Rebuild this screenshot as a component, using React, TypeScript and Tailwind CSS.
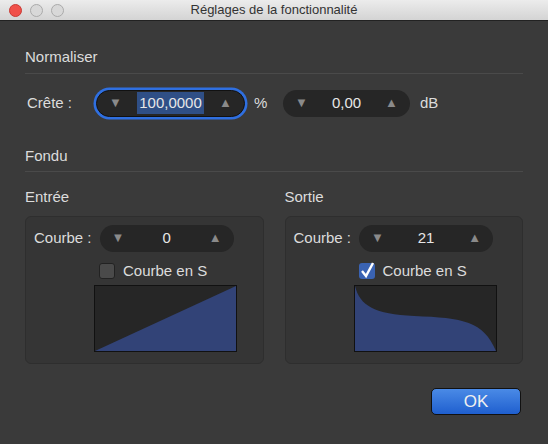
import React from 'react'

const font = { fontFamily: '"Liberation Sans", Arial, sans-serif' }

function Stepper({ value, w, focused }: { value: string; w: string; focused?: boolean }) {
  return (
    <div className={`${w} h-[27px] flex items-center justify-between px-3 rounded-full bg-[#262626] ${focused ? 'ring-[2.5px] ring-[#2f6fe0] border border-[#111]' : ''}`}>
      <span className="text-[#8a8a8a] text-[13px]">▼</span>
      <span className={`text-[15px] text-[#e6e6e6] ${focused ? 'bg-[#2f4f86] px-0.5' : ''}`}>{value}</span>
      <span className="text-[#8a8a8a] text-[13px]">▲</span>
    </div>
  )
}

function Panel({ title, value, checked, curve }: { title: string; value: string; checked?: boolean; curve: string }) {
  return (
    <div className="flex-1 flex flex-col">
      <div className="text-[15px] text-[#dcdcdc] mb-[7px]">{title}</div>
      <div className="h-[148px] rounded-md bg-[#353535] border border-[#2e2e2e] flex flex-col pl-[8px] pt-[8px]">
        <div className="flex items-center gap-[8px]">
          <span className="text-[15px] text-[#dcdcdc]">Courbe :</span>
          <Stepper value={value} w="w-[134px]" />
        </div>
        <div className="flex items-center gap-[8px] ml-[65px] mt-[8px]">
          {checked ? (
            <div className="w-[16px] h-[16px] rounded-[3px] bg-[#3a63b3] flex items-center justify-center">
              <svg width="16" height="18" viewBox="0 0 16 18"><path d="M3 9 L7 14 L14 1" stroke="white" strokeWidth="2.4" fill="none" /></svg>
            </div>
          ) : (
            <div className="w-[16px] h-[16px] rounded-[3px] bg-[#4a4a4a] border border-[#222]" />
          )}
          <span className="text-[15px] text-[#dcdcdc]">Courbe en S</span>
        </div>
        <div className="ml-[60px] mt-[3px] w-[143px] h-[67px] bg-[#262626] border border-[#111]">
          <svg width="141" height="65" viewBox="0 0 143 65" preserveAspectRatio="none"><path d={curve} fill="#324377" /></svg>
        </div>
      </div>
    </div>
  )
}

export default function App() {
  return (
    <div style={font} className="w-[548px] h-[444px] bg-[#3a3a3a] flex flex-col overflow-hidden">
      <div className="h-[21px] bg-gradient-to-b from-[#ececec] to-[#d4d4d4] border-b border-[#222] flex items-center relative">
        <div className="flex gap-[8px] pl-[9px]">
          <span className="w-[13px] h-[13px] rounded-full bg-[#f0504a] border border-[#c93a34]" />
          <span className="w-[13px] h-[13px] rounded-full bg-[#d8d8d8] border border-[#aaa]" />
          <span className="w-[13px] h-[13px] rounded-full bg-[#d8d8d8] border border-[#aaa]" />
        </div>
        <div className="absolute inset-0 flex items-center justify-center text-[13px] text-[#333]">Réglages de la fonctionnalité</div>
      </div>
      <div className="flex flex-col px-[25px] pt-[25px]">
        <div className="text-[15px] text-[#dcdcdc] pb-[4px] border-b border-[#4a4a4a]">Normaliser</div>
        <div className="flex items-center mt-[16px] pl-[2px]">
          <span className="text-[15px] text-[#dcdcdc] w-[69px]">Crête :</span>
          <Stepper value="100,0000" w="w-[149px]" focused />
          <span className="text-[15px] text-[#dcdcdc] ml-[9px] w-[29px]">%</span>
          <Stepper value="0,00" w="w-[127px]" />
          <span className="text-[15px] text-[#dcdcdc] ml-[10px]">dB</span>
        </div>
        <div className="text-[15px] text-[#dcdcdc] pb-[4px] border-b border-[#4a4a4a] mt-[28px]">Fondu</div>
        <div className="flex gap-[21px] mt-[14px]">
          <Panel title="Entrée" value="0" curve="M0 65 L143 0 L143 65 Z" />
          <Panel title="Sortie" value="21" checked curve="M0 0 C5 20 20 28 60 30 C110 32 130 35 143 65 L0 65 Z" />
        </div>
        <div className="flex justify-end mt-[24px] pr-[2px]">
          <button className="w-[90px] h-[27px] rounded-[5px] bg-gradient-to-b from-[#4a8ae6] to-[#1f5fcf] border border-[#111] text-[17px] text-[#f0f0f0]">OK</button>
        </div>
      </div>
    </div>
  )
}
